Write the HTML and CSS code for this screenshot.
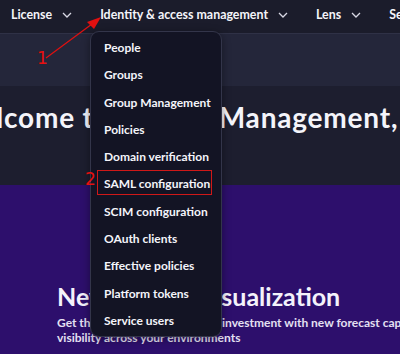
FILE: index.html
```html
<!DOCTYPE html>
<html>
<head>
<meta charset="utf-8">
<link rel="stylesheet" href="styles.css">
</head>
<body>
<div class="page">
  <nav class="topnav">
    <div class="nav-item"><span>License</span><svg class="chev" viewBox="0 0 10 6"><path d="M1 1l4 4 4-4"/></svg></div>
    <div class="nav-item"><span>Identity &amp; access management</span><svg class="chev" viewBox="0 0 10 6"><path d="M1 1l4 4 4-4"/></svg></div>
    <div class="nav-item"><span>Lens</span><svg class="chev" viewBox="0 0 10 6"><path d="M1 1l4 4 4-4"/></svg></div>
    <div class="nav-item"><span>Settings</span></div>
  </nav>
  <div class="band"></div>
  <section class="welcome">
    <h1 class="welcome-title">Welcome to <span class="tight">Account</span> Management, Admin</h1>
  </section>
  <section class="promo">
    <h2 class="promo-title">New <span class="tight-sm">budget</span> visualization</h2>
    <p class="promo-text">Get the most value out of your investment with new forecast capabilities and<br>visibility across your environments</p>
  </section>

  <ul class="dropdown">
    <li>People</li>
    <li>Groups</li>
    <li>Group Management</li>
    <li>Policies</li>
    <li>Domain verification</li>
    <li>SAML configuration</li>
    <li>SCIM configuration</li>
    <li>OAuth clients</li>
    <li>Effective policies</li>
    <li>Platform tokens</li>
    <li>Service users</li>
  </ul>

  <div class="highlight-box"></div>
  <span class="mark mark-1">1</span>
  <span class="mark mark-2">2</span>
  <svg class="arrow" width="400" height="354" viewBox="0 0 400 354">
    <line x1="46" y1="58" x2="92" y2="24" stroke="#e01010" stroke-width="1.2"/>
    <polygon points="101,17 87,22 94,29" fill="#e01010"/>
  </svg>
</div>
</body>
</html>
```
FILE: styles.css
```css
* { box-sizing: border-box; }
html, body { margin: 0; padding: 0; }
body {
  width: 400px;
  height: 354px;
  overflow: hidden;
  background: #2d0f6c;
  font-family: Lato, "Open Sans", sans-serif;
  color: #f2f2f7;
}
.page {
  position: relative;
  width: 400px;
  height: 354px;
  overflow: hidden;
}
.topnav {
  height: 33px;
  background: #1b1c2b;
  display: flex;
  align-items: center;
  gap: 28px;
  padding-left: 11px;
  white-space: nowrap;
  padding-bottom: 4px;
}
.nav-item {
  display: flex;
  align-items: center;
  gap: 10px;
  font-size: 12.4px;
  font-weight: 700;
  color: #f4f4fa;
}
.chev {
  width: 10px;
  height: 6px;
  fill: none;
  stroke: #d8d8e4;
  stroke-width: 1.3;
}
.band {
  height: 53px;
  background: #24263a;
  border-top: 1px solid #2f3146;
}
.welcome {
  height: 99px;
  background: #1d1e2f;
  overflow: hidden;
  padding-top: 15px;
}
.welcome-title {
  margin: 0 0 0 -48px;
  font-size: 28px;
  font-weight: 700;
  letter-spacing: 0.8px;
  line-height: 32px;
  white-space: nowrap;
  color: #f4f4fa;
}
.welcome-title .tight {
  letter-spacing: -1.5px;
}
.promo {
  height: 169px;
  background: #2d0f6c;
  padding: 96px 0 0 57px;
  white-space: nowrap;
}
.promo-title {
  margin: 0;
  font-size: 25px;
  font-weight: 700;
  line-height: 30px;
  color: #f4f2fb;
}
.promo-title .tight-sm {
  letter-spacing: 0.6px;
}
.promo-text {
  margin: 4px 0 0;
  font-size: 12px;
  font-weight: 700;
  line-height: 15px;
  color: #e4e0f2;
}
.dropdown {
  position: absolute;
  left: 90px;
  top: 31px;
  width: 132px;
  height: 306px;
  margin: 0;
  padding: 2px 0 0 13px;
  list-style: none;
  background: #131424;
  border: 1px solid #33354a;
  border-radius: 9px;
  box-shadow: 0 2px 8px rgba(0,0,0,0.4);
}
.dropdown li {
  height: 27.3px;
  line-height: 27.3px;
  font-size: 12px;
  font-weight: 700;
  color: #f4f4fa;
  white-space: nowrap;
}
.highlight-box {
  position: absolute;
  left: 97px;
  top: 170px;
  width: 115px;
  height: 25px;
  border: 1px solid #d01818;
}
.mark {
  position: absolute;
  font-family: "DejaVu Sans", sans-serif;
  font-size: 17px;
  line-height: 17px;
  color: #e81010;
}
.mark-1 { left: 37px; top: 50px; }
.mark-2 { left: 85px; top: 171px; }
.arrow {
  position: absolute;
  left: 0;
  top: 0;
  pointer-events: none;
}
```
